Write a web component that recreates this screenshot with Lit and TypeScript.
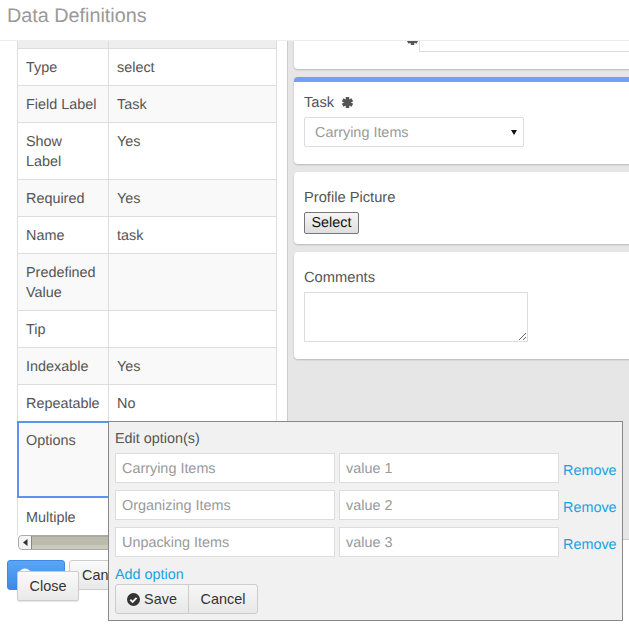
import { LitElement, html, css } from "lit";
import { customElement } from "lit/decorators.js";

const rows: [string, string, string][] = [
  ["Type", "select", "h37 odd"],
  ["Field Label", "Task", "h37 even"],
  ["Show Label", "Yes", "h57 odd"],
  ["Required", "Yes", "h37 even"],
  ["Name", "task", "h37 odd"],
  ["Predefined Value", "", "h57 even"],
  ["Tip", "", "h37 odd"],
  ["Indexable", "Yes", "h37 even"],
  ["Repeatable", "No", "h37 odd"],
];
const options: [string, string][] = [
  ["Carrying Items", "value 1"],
  ["Organizing Items", "value 2"],
  ["Unpacking Items", "value 3"],
];

const asterisk = (cls: string) => html`<svg class=${cls} viewBox="0 0 14 14">
  <path d="M7 1v12M1.8 4l10.4 6M12.2 4L1.8 10" stroke="currentColor" stroke-width="3.8" fill="none"/>
</svg>`;

@customElement("app-root")
export class AppRoot extends LitElement {
  static styles = css`
    :host { display: block; position: relative; width: 629px; height: 624px; overflow: hidden; background: #fff;
      font-family: "Liberation Sans", Arial, sans-serif; font-size: 14.4px; line-height: 20px; color: #555;
      text-rendering: geometricPrecision; }
    * { box-sizing: border-box; }
    .header { height: 41px; padding: 5px 7px 0; border-bottom: 1px solid #eee; font-size: 19.8px; line-height: 22px; color: #999; }
    .main { display: flex; align-items: flex-start; }
    .left { width: 287px; flex: none; padding-left: 17px; }
    .table { width: 260px; border-left: 1px solid #ddd; border-right: 1px solid #ddd; }
    .row { display: grid; grid-template-columns: 91px 1fr; border-bottom: 1px solid #ddd; }
    .row > div { padding: 9px 8px 0; }
    .row > div:first-child { border-right: 1px solid #ddd; }
    .stub { height: 8px; background: #eee; }
    .stub > div { padding: 0 !important; }
    .h37 { height: 37px; }
    .h57 { height: 57px; }
    .even { background: #f9f9f9; }
    .optwrap { height: 77px; border-bottom: 1px solid #ddd; }
    .options { height: 77px; background: #f9f9f9; border: 2px solid #5b94ee; margin: -1px 0 0 -1px; width: 92px; padding: 8px 7px; border-right: none; }
    .multi { height: 37px; padding: 10px 8px 0; }
    .scrollbar { height: 15px; width: 261px; margin-left: 1px; display: flex; border: 1px solid #aaa; border-radius: 4px 0 0 4px; background: #bcbcae; overflow: hidden; }
    .arrow { width: 13px; background: #f4f4f4; border-right: 1px solid #888; display: flex; align-items: center; justify-content: center; }
    .track { flex: 1; border-top: 1px solid #a9a99c; box-shadow: inset 0 -4px 0 #c9c9bc; }
    .actions { display: flex; gap: 4px; margin: 10px 0 0 -10px; }
    .btn { height: 30px; border: 1px solid #ccc; border-radius: 3px; background: linear-gradient(#fafafa, #e9e9e9); color: #333;
      font: inherit; padding: 0 8px; }
    .primary { width: 58px; background: linear-gradient(#5aa6f5, #3d88e8); border-color: #3d88e8; color: #fff; display: flex; align-items: center; padding-left: 10px; }
    .cancel-under { width: 60px; text-align: left; padding-left: 12px; }
    .right { flex: 1; min-width: 0; height: 499px; background: #e6e6e6; border-left: 1px solid #ccc; border-bottom: 1px solid #ccc;
      padding-left: 6px; display: flex; flex-direction: column; gap: 8px; }
    .card { background: #fff; border-radius: 4px; box-shadow: 0 1px 2px rgba(0,0,0,.2); padding: 0 10px; width: 345px; flex: none; }
    .c1 { height: 28px; border-radius: 0 0 4px 4px; position: relative; overflow: hidden; }
    .c1 .stubfield { width: 220px; height: 11px; border: 1px solid #ddd; border-top: none; margin-left: 115px; background: #fff; }
    .c1 .star { position: absolute; left: 112px; top: -8px; width: 13px; height: 13px; color: #555; }
    .c2 { height: 87px; border-top: 5px solid #6fa1f6; padding-top: 11px; }
    .c3 { height: 72px; padding-top: 16px; }
    .c4 { height: 107px; padding-top: 16px; }
    .lbl { display: block; margin-bottom: 4px; line-height: 20px; font-size: 14.7px; }
    .taskrow { display: flex; align-items: center; gap: 7px; }
    .ast { width: 13px; height: 13px; color: #555; margin-top: -2px; }
    .selwrap { position: relative; width: 220px; height: 30px; }
    select { width: 220px; height: 30px; appearance: none; border: 1px solid #ddd; border-radius: 2px; background: #fff; color: #999;
      font: 14.4px "Liberation Sans", sans-serif; padding: 1px 10px 0; text-rendering: geometricPrecision; }
    .caret { position: absolute; right: 7px; top: 12px; width: 6px; height: 6px; }
    .nbtn { display: block; width: 55px; height: 22px; padding: 0; border: 1px solid #777; border-radius: 2px; background: linear-gradient(#f6f6f6, #dedede);
      color: #111; font: 14.4px "Liberation Sans", sans-serif; text-rendering: geometricPrecision; }
    textarea { display: block; width: 224px; height: 50px; border: 1px solid #ddd; background: #fff; margin: 0; padding: 0; }
    .close { position: absolute; left: 17px; top: 571px; width: 62px; height: 30px; background: linear-gradient(#fafafa, #e9e9e9); border: 1px solid #ccc; border-radius: 2px;
      font: inherit; color: #333; padding: 0; box-shadow: 0 1px 1px rgba(0,0,0,.1); }
    .popup { position: absolute; left: 108px; top: 421px; width: 515px; height: 200px; background: #f1f1f1; border: 1px solid #888; padding: 7px 0 0 6px; }
    .ptitle { height: 20px; line-height: 20px; color: #555; margin-bottom: 4px; }
    .optrow { display: flex; height: 37px; align-items: flex-start; }
    .optrow input { flex: none; width: 220px; height: 30px; border: 1px solid #ddd; background: #fff; padding: 1px 6px 0; font: 14.4px "Liberation Sans", sans-serif; margin: 0 4px 0 0; text-rendering: geometricPrecision; }
    input::placeholder { color: #999; opacity: 1; }
    a { color: #1ba1e2; text-decoration: none; }
    .optrow a { margin-top: 8px; flex: none; }
    .add { display: block; height: 20px; line-height: 20px; margin-top: 1px; }
    .group { display: flex; margin-top: -1px; }
    .group .gb { height: 30px; border: 1px solid #ccc; background: linear-gradient(#f7f7f7, #e8e8e8); color: #333; font: inherit; padding: 0; display: flex; align-items: center; justify-content: center; gap: 4px; }
    .g1 { width: 74px; border-radius: 3px 0 0 3px; }
    .g2 { width: 70px; margin-left: -1px; border-radius: 0 3px 3px 0; }
  `;

  render() {
    return html`
      <div class="header">Data Definitions</div>
      <div class="main">
        <div class="left">
          <div class="table">
            <div class="row stub"><div></div><div></div></div>
            ${rows.map(([a, b, c]) => html`<div class="row ${c}"><div>${a}</div><div>${b}</div></div>`)}
            <div class="optwrap"><div class="options">Options</div></div>
            <div class="multi">Multiple</div>
          </div>
          <div class="scrollbar">
            <div class="arrow"><svg width="5" height="7" viewBox="0 0 5 7"><path d="M4.5 0v7L0 3.5z" fill="#333"/></svg></div>
            <div class="track"></div>
          </div>
          <div class="actions">
            <button class="btn primary" aria-label="Save"><svg width="14" height="14" viewBox="0 0 14 14"><circle cx="7" cy="7" r="6.5" fill="#fff"/></svg></button>
            <button class="btn cancel-under">Cancel</button>
          </div>
        </div>
        <div class="right">
          <div class="card c1">${asterisk("star")}<div class="stubfield"></div></div>
          <div class="card c2">
            <label class="lbl taskrow">Task ${asterisk("ast")}</label>
            <div class="selwrap">
              <select><option>Carrying Items</option></select>
              <svg class="caret" viewBox="0 0 6 6"><path d="M0 1h6L3 6z" fill="#111"/></svg>
            </div>
          </div>
          <div class="card c3">
            <label class="lbl">Profile Picture</label>
            <button class="nbtn">Select</button>
          </div>
          <div class="card c4">
            <label class="lbl">Comments</label>
            <textarea></textarea>
          </div>
        </div>
      </div>
      <button class="close">Close</button>
      <div class="popup">
        <div class="ptitle">Edit option(s)</div>
        ${options.map(([a, b]) => html`<div class="optrow">
          <input placeholder=${a} /><input placeholder=${b} /><a href="#">Remove</a>
        </div>`)}
        <a class="add" href="#">Add option</a>
        <div class="group">
          <button class="gb g1">
            <svg width="13" height="13" viewBox="0 0 13 13"><circle cx="6.5" cy="6.5" r="6.5" fill="#333"/><path d="M3.3 6.6l2.3 2.3 4-4" fill="none" stroke="#f1f1f1" stroke-width="1.9"/></svg>
            Save
          </button>
          <button class="gb g2">Cancel</button>
        </div>
      </div>
    `;
  }
}
